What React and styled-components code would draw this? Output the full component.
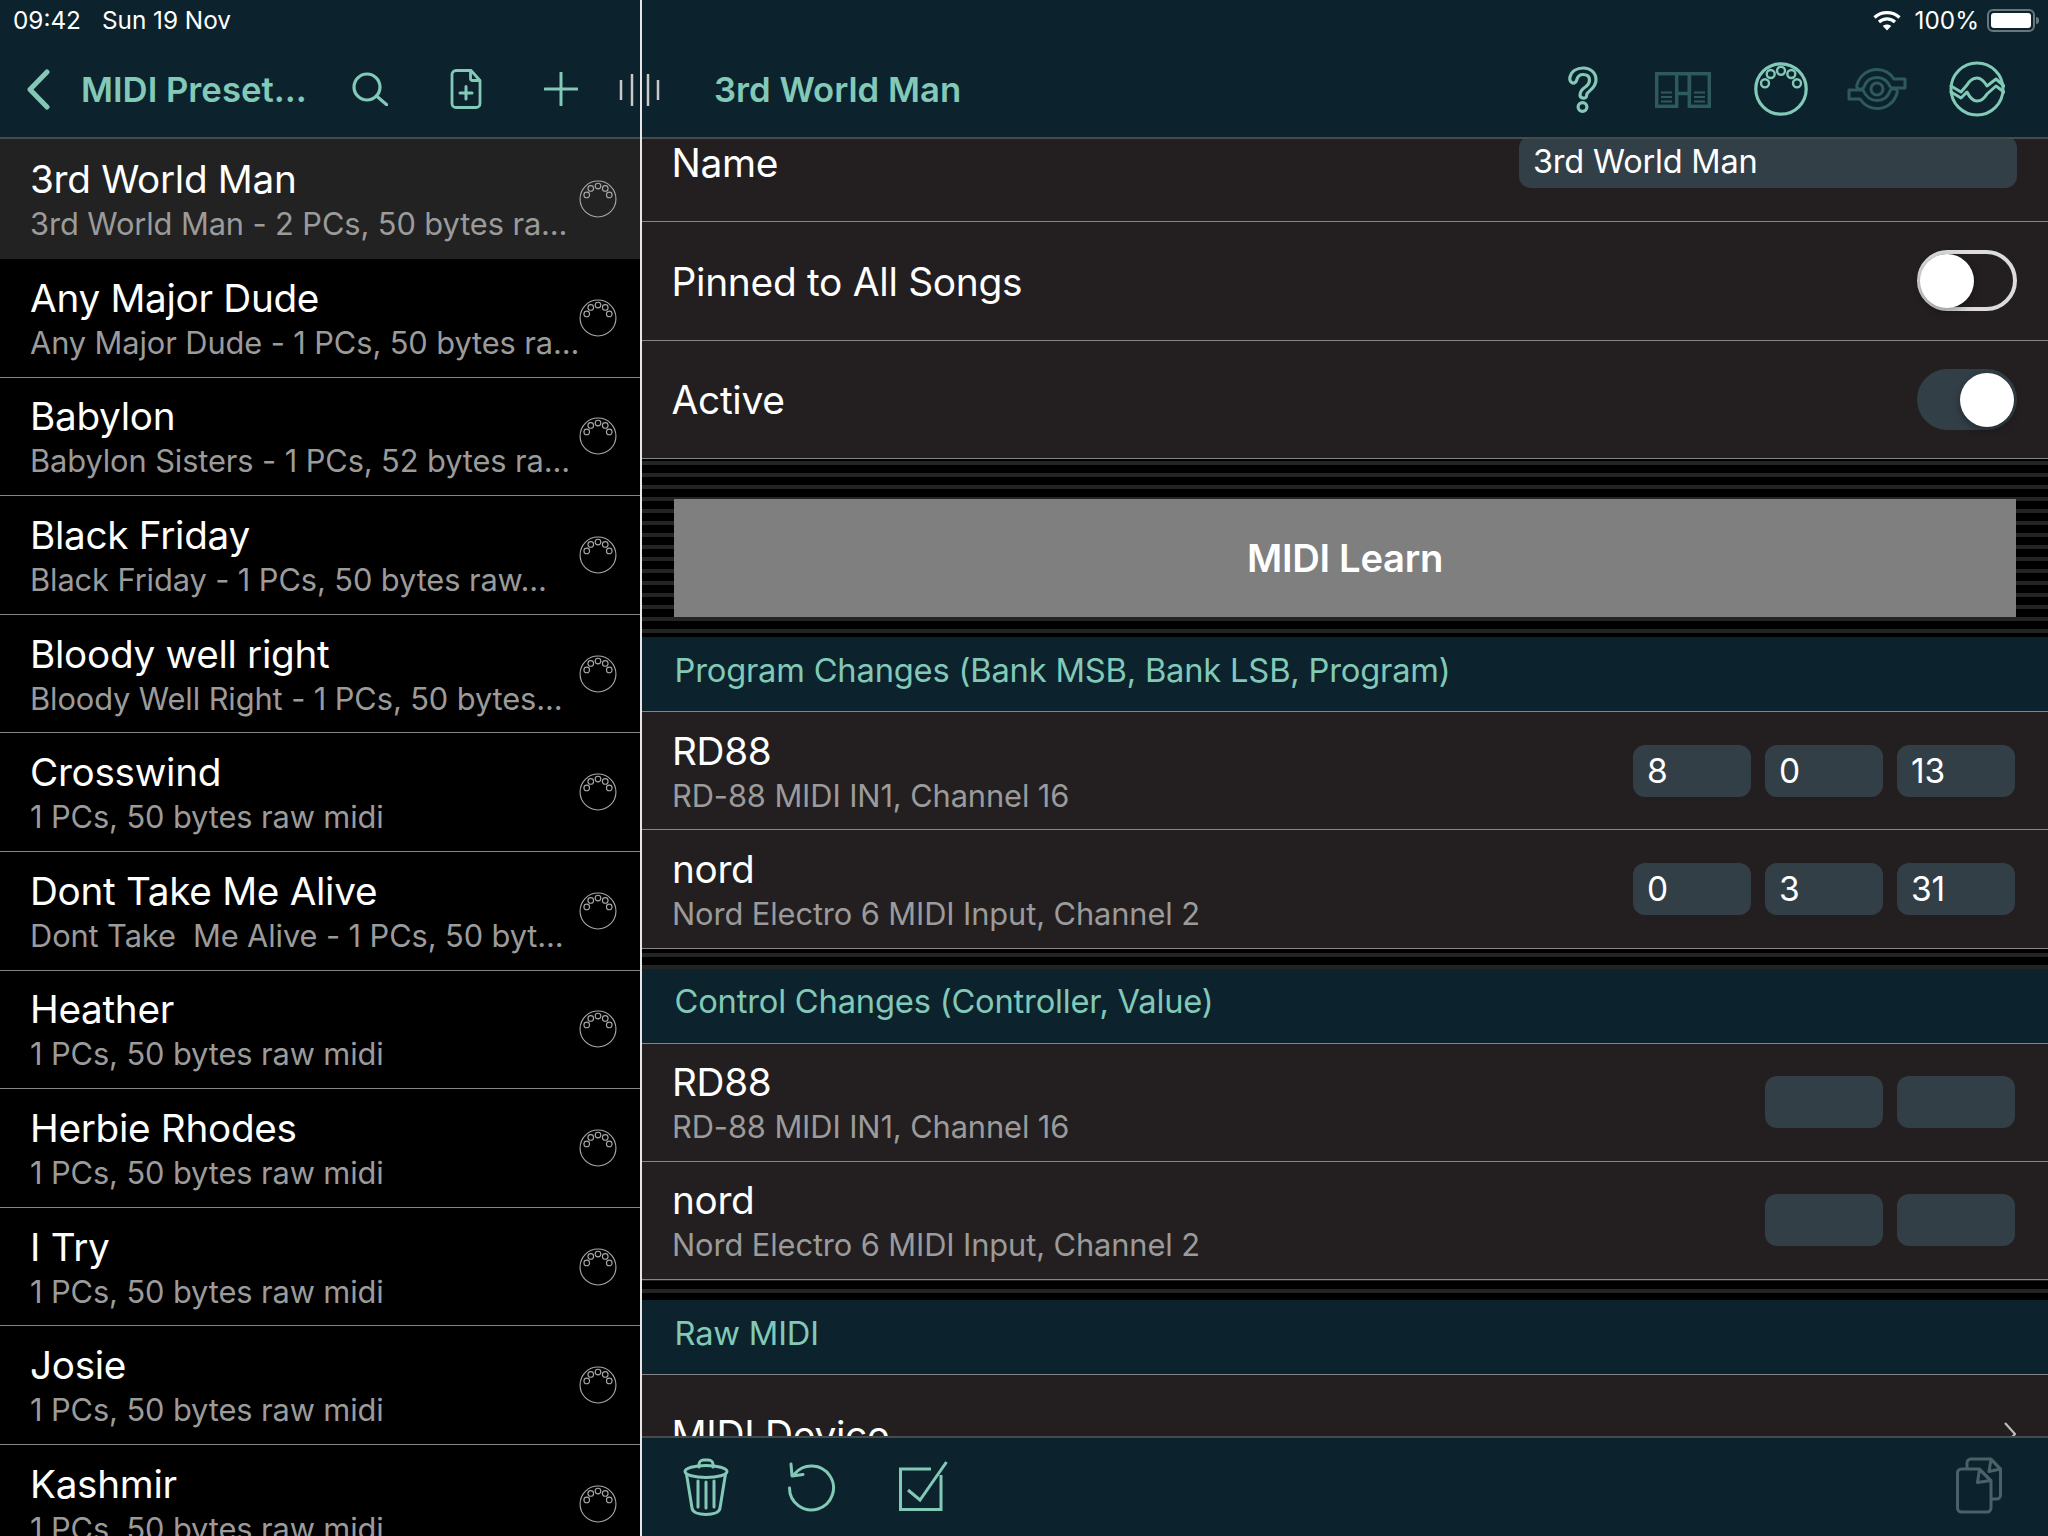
import React from "react";
import styled, { createGlobalStyle } from "styled-components";

const TEAL = "#82c9b8";
const DIM = "#2f5a5c";
const NAVY = "#0c232d";
const PANEL = "#231f20";
const FIELD = "#333f47";
const LINE = "#858585";

const Global = createGlobalStyle`
  html, body { margin: 0; padding: 0; background: #000; }
  body { font-family: Inter, "Noto Sans", "Liberation Sans", sans-serif; color: #fff; -webkit-font-smoothing: antialiased; }
`;

const Screen = styled.div`
  width: 2048px;
  height: 1536px;
  display: flex;
  position: relative;
  overflow: hidden;
`;
const Sidebar = styled.aside`
  width: 642px;
  flex: none;
  display: flex;
  flex-direction: column;
  background: #000;
  border-right: 2px solid #e6e6e6;
  box-sizing: border-box;
`;
const Detail = styled.main`
  flex: 1;
  min-width: 0;
  display: flex;
  flex-direction: column;
  background: ${PANEL};
`;
const Header = styled.header`
  height: 139px;
  flex: none;
  box-sizing: border-box;
  display: flex;
  flex-direction: column;
  background: ${NAVY};
  border-bottom: 2px solid #454a4d;
`;
const StatusRow = styled.div`
  height: 40px;
  flex: none;
  display: flex;
  align-items: center;
  justify-content: ${(p) => (p.$end ? "flex-end" : "flex-start")};
  padding: 0 13px;
  font-size: 24.3px;
  color: #fff;
`;
const StatusDate = styled.span`
  margin-left: 21px;
`;
const NavRow = styled.div`
  flex: 1;
  display: flex;
  align-items: center;
  padding-top: 1px;
  padding-left: ${(p) => p.$pad}px;
`;
const NavTitle = styled.div`
  color: ${TEAL};
  font-size: 34.7px;
  font-weight: 600;
  white-space: nowrap;
  width: ${(p) => p.$w}px;
  margin-left: ${(p) => p.$ml || 0}px;
  flex: none;
`;
const NavIcon = styled.svg`
  flex: none;
  margin-left: ${(p) => p.$ml || 0}px;
  margin-top: ${(p) => p.$mt || 0}px;
  fill: none;
  stroke: ${(p) => (p.$dim ? DIM : TEAL)};
  stroke-width: ${(p) => p.$sw || 3.2}px;
  stroke-linecap: round;
  stroke-linejoin: round;
`;
const Grip = styled.svg`
  position: absolute;
  left: 617px;
  top: 72px;
  stroke: #c8c8c8;
  stroke-width: 2.5px;
`;
const List = styled.div`
  flex: 1;
  min-height: 0;
  overflow: hidden;
`;
const ListRow = styled.div`
  height: ${(p) => (p.$active ? 120 : 118.6)}px;
  box-sizing: border-box;
  display: flex;
  align-items: center;
  padding: 0 23px 0 30px;
  background: ${(p) => (p.$active ? "#222222" : "#000")};
  border-bottom: ${(p) => (p.$active ? "none" : `1.5px solid ${LINE}`)};
`;
const RowText = styled.div`
  flex: 1;
  min-width: 0;
  padding-top: 3px;
`;
const Title = styled.div`
  font-size: 38.7px;
  line-height: 44.5px;
  color: #fff;
  white-space: nowrap;
  letter-spacing: -0.3px;
`;
const Sub = styled.div`
  font-size: 30.8px;
  line-height: 40px;
  color: #9b9b9b;
  white-space: pre;
  margin-top: 2.5px;
  letter-spacing: -0.1px;
`;
const MidiMini = styled.svg`
  flex: none;
  fill: none;
  stroke: #a8a8a8;
  stroke-width: 1.6px;
`;
const Scroll = styled.div`
  flex: 1;
  min-height: 0;
  overflow: hidden;
  background: linear-gradient(#000 8px, #242424 8px) 0 2px / 100% 12px;
`;
const Form = styled.div`
  margin-top: -35.5px;
  display: flex;
  flex-direction: column;
`;
const Row = styled.div`
  height: ${(p) => p.$h || 118.5}px;
  flex: none;
  box-sizing: border-box;
  display: flex;
  align-items: center;
  justify-content: space-between;
  padding: 0 32px 0 30px;
  background: ${PANEL};
  border-bottom: 1.5px solid ${LINE};
`;
const RowLabel = styled.div`
  font-size: 38.9px;
  letter-spacing: -0.3px;
  color: #fff;
  white-space: nowrap;
  padding-top: 1px;
  margin-left: -0.5px;
`;
const Field = styled.div`
  width: ${(p) => p.$w || 118}px;
  height: 52px;
  box-sizing: border-box;
  background: ${FIELD};
  border-radius: 12px;
  padding-left: 14px;
  font-size: ${(p) => (p.$w ? 32.5 : 33.5)}px;
  line-height: 52px;
  letter-spacing: -0.2px;
  color: #fff;
  white-space: nowrap;
  margin-right: ${(p) => (p.$w ? -1 : 0)}px;
`;
const Fields = styled.div`
  display: flex;
  gap: 14px;
  flex: none;
  margin-right: 1px;
`;
const Toggle = styled.div`
  width: 100px;
  height: 61px;
  box-sizing: border-box;
  border-radius: 31px;
  position: relative;
  margin-right: -1px;
  background: ${(p) => (p.$on ? FIELD : "transparent")};
  border: ${(p) => (p.$on ? "none" : "4px solid #dcdcdc")};
`;
const Thumb = styled.div`
  position: absolute;
  width: 54px;
  height: 54px;
  border-radius: 50%;
  background: #fff;
  top: ${(p) => (p.$on ? 4 : 0)}px;
  left: ${(p) => (p.$on ? 43 : -1)}px;
  box-shadow: 0 3px 8px rgba(0, 0, 0, 0.35);
`;
const LearnButton = styled.button`
  display: block;
  margin: 40px 32px 20px 32px;
  height: 118px;
  flex: none;
  border: none;
  padding: 0;
  background: #7f7f7f;
  color: #fff;
  font-family: inherit;
  font-size: 38.2px;
  font-weight: 600;
  letter-spacing: -0.3px;
`;
const SectionHead = styled.div`
  height: ${(p) => p.$h || 75}px;
  flex: none;
  box-sizing: border-box;
  display: flex;
  align-items: center;
  padding: 0 0 9px 32.5px;
  margin-top: ${(p) => p.$mt || 0}px;
  background: ${NAVY};
  border-bottom: 1.5px solid ${LINE};
  color: ${TEAL};
  font-size: 32.7px;
  letter-spacing: -0.2px;
`;
const Chevron = styled.svg`
  flex: none;
  fill: none;
  stroke: #bdbdbd;
  stroke-width: 2.2px;
`;
const BottomBar = styled.footer`
  height: 100px;
  flex: none;
  box-sizing: border-box;
  display: flex;
  align-items: center;
  padding: 0 46px 0 41px;
  background: ${NAVY};
  border-top: 2px solid #454a4d;
`;
const BarIcon = styled.svg`
  flex: none;
  fill: none;
  stroke: ${(p) => p.$color || TEAL};
  stroke-width: 3px;
  stroke-linecap: round;
  stroke-linejoin: round;
  margin-left: ${(p) => p.$ml || 0}px;
  margin-top: ${(p) => p.$mt || 0}px;
`;
const Spacer = styled.div`
  flex: 1;
`;
const StatusText = styled.span`
  margin-left: 14px;
`;

const Wifi = () => (
  <svg width="28" height="21" viewBox="0 0 28 21" fill="none" stroke="#fff" strokeWidth="3.2">
    <path d="M1.5 7.5C8.5 1 19.5 1 26.5 7.5" />
    <path d="M6 12c4.6-4.2 11.4-4.2 16 0" />
    <path d="M14 20.5l-4.2-4.4c2.4-2 6-2 8.4 0z" fill="#fff" stroke="none" />
  </svg>
);
const BatteryShell = styled.div`
  margin-left: 8px;
  width: 48px;
  height: 23px;
  box-sizing: border-box;
  border: 2px solid #69767c;
  border-radius: 6px;
  padding: 2px;
  position: relative;
  &::after {
    content: "";
    position: absolute;
    right: -6px;
    top: 6px;
    width: 3px;
    height: 7px;
    border-radius: 0 3px 3px 0;
    background: #69767c;
  }
`;
const BatteryFill = styled.div`
  width: 100%;
  height: 100%;
  background: #fff;
  border-radius: 3px;
`;

const Pins = ({ r }) => (
  <>
    <circle cx="0" cy="-18.3" r={r} />
    <circle cx="-10.3" cy="-15" r={r} />
    <circle cx="10.3" cy="-15" r={r} />
    <circle cx="-16" cy="-5.7" r={r} />
    <circle cx="16" cy="-5.7" r={r} />
  </>
);

const presets = [
  ["3rd World Man", "3rd World Man - 2 PCs, 50 bytes ra..."],
  ["Any Major Dude", "Any Major Dude - 1 PCs, 50 bytes ra..."],
  ["Babylon", "Babylon Sisters - 1 PCs, 52 bytes ra..."],
  ["Black Friday", "Black Friday - 1 PCs, 50 bytes raw..."],
  ["Bloody well right", "Bloody Well Right - 1 PCs, 50 bytes..."],
  ["Crosswind", "1 PCs, 50 bytes raw midi"],
  ["Dont Take Me Alive", "Dont Take  Me Alive - 1 PCs, 50 byt..."],
  ["Heather", "1 PCs, 50 bytes raw midi"],
  ["Herbie Rhodes", "1 PCs, 50 bytes raw midi"],
  ["I Try", "1 PCs, 50 bytes raw midi"],
  ["Josie", "1 PCs, 50 bytes raw midi"],
  ["Kashmir", "1 PCs, 50 bytes raw midi"],
];

const DeviceRow = ({ name, port, values, h }) => (
  <Row $h={h}>
    <RowText>
      <Title>{name}</Title>
      <Sub>{port}</Sub>
    </RowText>
    <Fields>
      {values.map((v, i) => (
        <Field key={i}>{v}</Field>
      ))}
    </Fields>
  </Row>
);

export default function App() {
  return (
    <Screen>
      <Global />
      <Sidebar>
        <Header>
          <StatusRow>
            <span>09:42</span>
            <StatusDate>Sun 19 Nov</StatusDate>
          </StatusRow>
          <NavRow $pad={26}>
            <NavIcon width="24" height="41" viewBox="0 0 24 41" $sw={5}>
              <path d="M21 3L4 20.5 21 38" />
            </NavIcon>
            <NavTitle $w={240} $ml={31}>MIDI Preset...</NavTitle>
            <NavIcon width="36" height="34" viewBox="0 0 36 34" $ml={31}>
              <circle cx="15" cy="15" r="13" />
              <path d="M24.5 24L35 33" />
            </NavIcon>
            <NavIcon width="32" height="40" viewBox="0 0 32 40" $ml={62} $sw={2.8}>
              <path d="M21 1.5H6A4 4 0 0 0 2 5.5V34.5A4 4 0 0 0 6 38.5H26A4 4 0 0 0 30 34.5V11.5Z" />
              <path d="M20.5 2V9.5A2 2 0 0 0 22.5 11.5H29.5" />
              <path d="M16 17.5V30M10 24H22" strokeWidth="3" />
            </NavIcon>
            <NavIcon width="34" height="34" viewBox="0 0 34 34" $ml={62} $sw={3}>
              <path d="M17 1V33M1 17H33" />
            </NavIcon>
          </NavRow>
        </Header>
        <List>
          {presets.map(([t, s], i) => (
            <ListRow key={t} $active={i === 0}>
              <RowText>
                <Title>{t}</Title>
                <Sub>{s}</Sub>
              </RowText>
              <MidiMini width="38" height="38" viewBox="-27 -27 54 54">
                <circle cx="0" cy="0" r="25.5" />
                <Pins r="4" />
              </MidiMini>
            </ListRow>
          ))}
        </List>
      </Sidebar>
      <Detail>
        <Header>
          <StatusRow $end>
            <Wifi />
            <StatusText>100%</StatusText>
            <BatteryShell>
              <BatteryFill />
            </BatteryShell>
          </StatusRow>
          <NavRow $pad={72}>
            <NavTitle $w={854}>3rd World Man</NavTitle>
            <NavIcon width="30" height="47" viewBox="0 0 30 47" $ml={0} $mt={1}>
              <path d="M4.5 17C2 16 1.5 13 2 11C3.5 5 9 2 15 2C23 2 28 7 28 14C28 20 24 23 21 25.5C19 27 18.5 28.5 18.5 30C18.5 33 12 33 12 29C12 25 15 22.5 18 20.5C20.5 18.5 21.5 16.5 21.5 14C21.5 10.5 19 8.5 15 8.5C12 8.5 10 10 9 13C8.5 16 6.5 17.5 4.5 17Z" />
              <circle cx="14.5" cy="41" r="4.4" />
            </NavIcon>
            <NavIcon width="56" height="36" viewBox="0 0 56 36" $dim $ml={57} $mt={2} $sw={3.4}>
              <g strokeLinecap="butt" strokeLinejoin="miter">
                <rect x="1.7" y="1.7" width="20" height="32.6" />
                <rect x="34.3" y="1.7" width="20" height="32.6" />
                <path d="M21.5 1.7H34.5V21.5H21.5" />
                <path d="M6 20.5H17M6 25H17M6 29.5H17M39 20.5H50M39 25H50M39 29.5H50" strokeWidth="2.2" />
              </g>
            </NavIcon>
            <NavIcon width="54" height="54" viewBox="-27 -27 54 54" $ml={43} $sw={3.2}>
              <circle cx="0" cy="0" r="25.2" />
              <g strokeWidth="2.4">
                <Pins r="4" />
              </g>
            </NavIcon>
            <NavIcon width="60" height="42" viewBox="0 0 60 42" $dim $ml={39} $sw={3}>
              <path d="M10 17C13 6 22 1.5 30 1.5C37 1.5 43 5 47 11H58V20H44C41 13 36 9.5 30 9.5C24 9.5 19 13 17 19C15 23 8 21 10 17Z" />
              <path d="M50 25C47 36 38 40.5 30 40.5C23 40.5 17 37 13 31H2V22H16C19 29 24 32.5 30 32.5C36 32.5 41 29 43 23C45 19 52 21 50 25Z" />
              <circle cx="30" cy="21" r="6" />
            </NavIcon>
            <NavIcon width="56" height="56" viewBox="-28 -28 56 56" $ml={42} $sw={3}>
              <circle cx="0" cy="0" r="26" />
              <path d="M-26 -3L-16 3L-10 -4C-7 -9 -4 -11 0 -11C4 -11 7 -8 10 -3L19 -10L27 -3" />
              <path d="M-26 3L-16 9L-10 3C-7 9 -4 12 0 12C4 12 7 10 10 5L19 -3L27 3" />
            </NavIcon>
          </NavRow>
        </Header>
        <Scroll>
          <Form>
            <Row>
              <RowLabel>Name</RowLabel>
              <Field $w={498}>3rd World Man</Field>
            </Row>
            <Row>
              <RowLabel>Pinned to All Songs</RowLabel>
              <Toggle>
                <Thumb />
              </Toggle>
            </Row>
            <Row>
              <RowLabel>Active</RowLabel>
              <Toggle $on>
                <Thumb $on />
              </Toggle>
            </Row>
            <LearnButton>MIDI Learn</LearnButton>
            <SectionHead>Program Changes (Bank MSB, Bank LSB, Program)</SectionHead>
            <DeviceRow h={118.25} name="RD88" port="RD-88 MIDI IN1, Channel 16" values={["8", "0", "13"]} />
            <DeviceRow h={118.25} name="nord" port="Nord Electro 6 MIDI Input, Channel 2" values={["0", "3", "31"]} />
            <SectionHead $mt={20}>Control Changes (Controller, Value)</SectionHead>
            <DeviceRow h={118.25} name="RD88" port="RD-88 MIDI IN1, Channel 16" values={["", ""]} />
            <DeviceRow h={118.25} name="nord" port="Nord Electro 6 MIDI Input, Channel 2" values={["", ""]} />
            <SectionHead $mt={20}>Raw MIDI</SectionHead>
            <Row>
              <RowLabel>MIDI Device</RowLabel>
              <Chevron width="12" height="24" viewBox="0 0 12 24">
                <path d="M1 1L11 12L1 23" />
              </Chevron>
            </Row>
          </Form>
        </Scroll>
        <BottomBar>
          <BarIcon width="46" height="58" viewBox="0 0 46 58">
            <ellipse cx="23" cy="13.5" rx="21" ry="6" />
            <path d="M16 9V6.5A4.5 4.5 0 0 1 20.5 2H25.5A4.5 4.5 0 0 1 30 6.5V9" />
            <path d="M3.5 16L9 50C9.5 54.5 16 56.5 23 56.5C30 56.5 36.5 54.5 37 50L42.5 16" />
            <path d="M15 23V49M23 24V50M31 23V49" />
          </BarIcon>
          <BarIcon width="48" height="50" viewBox="0 0 48 50" $ml={59}>
            <path d="M6.5 12A22 22 0 1 1 1.5 26" />
            <path d="M3 2L4 14L15 12.5" />
          </BarIcon>
          <BarIcon width="49" height="50" viewBox="0 0 49 50" $ml={63} $mt={-3}>
            <g strokeLinecap="butt" strokeLinejoin="miter">
              <path d="M32 8H1.5V48.5H42V14" />
              <path d="M9 29L21 39L47.5 1" />
            </g>
          </BarIcon>
          <Spacer />
          <BarIcon width="46" height="57" viewBox="0 0 46 57" $color="#4b6068" $mt={-4}>
            <path d="M23.5 12H5.5A4 4 0 0 0 1.5 16V51A4 4 0 0 0 5.5 55H31A4 4 0 0 0 35 51V23.5Z" />
            <path d="M23.5 12.5L34.5 23.5L21.5 25.5Z" />
            <path d="M11 11V6A4 4 0 0 1 15 2H35L44.5 12V38A4 4 0 0 1 40.5 42H36" />
            <path d="M35 2.5L44.5 12L33 14.5Z" />
          </BarIcon>
        </BottomBar>
      </Detail>
      <Grip width="44" height="34" viewBox="0 0 44 34">
        <path d="M4 8V28M15 2V34M31 2V34M41 8V28" />
      </Grip>
    </Screen>
  );
}
